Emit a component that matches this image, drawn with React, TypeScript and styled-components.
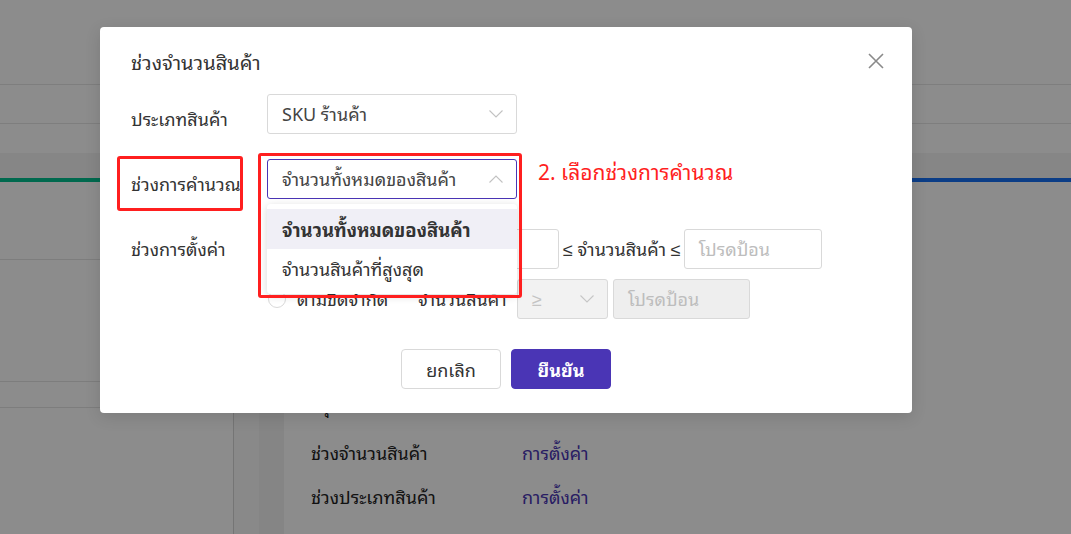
import React from "react";
import styled, { createGlobalStyle } from "styled-components";

const GlobalStyle = createGlobalStyle`
  html, body { margin: 0; padding: 0; }
  body {
    font-family: "Noto Sans Thai Looped", "Noto Sans Thai", "Noto Sans", "Liberation Sans", sans-serif;
    color: #333;
    line-height: 1.3;
  }
  * { box-sizing: border-box; }
`;

const Page = styled.div`
  position: relative;
  width: 1071px;
  height: 534px;
  overflow: hidden;
  background: #fff;
  display: flex;
  flex-direction: column;
`;

const TopArea = styled.div`
  height: 153px;
  display: flex;
  flex-direction: column;
`;

const TopLine = styled.div<{ $mt: number }>`
  margin-top: ${(p) => p.$mt}px;
  height: 1px;
  background: #e6e6e6;
`;

const TabBar = styled.div`
  height: 29px;
  background: #f4f4f4;
  display: flex;
  align-items: flex-end;
`;

const TabIndicator = styled.div<{ $color: string }>`
  flex: 1;
  height: 4px;
  background: ${(p) => p.$color};
`;

const Body = styled.div`
  flex: 1;
  display: flex;
`;

const Sidebar = styled.div`
  width: 234px;
  border-right: 1px solid #d6d6d6;
  display: flex;
  flex-direction: column;
`;

const SideLine = styled.div<{ $mt: number }>`
  margin-top: ${(p) => p.$mt}px;
  height: 1px;
  background: #e3e3e3;
`;

const Gutter = styled.div<{ $bg: string; $w: number }>`
  width: ${(p) => p.$w}px;
  background: ${(p) => p.$bg};
`;

const Content = styled.div`
  flex: 1;
  background: #fff;
  padding: 212px 0 0 27px;
  display: flex;
  flex-direction: column;
  gap: 22px;
`;

const ContentRow = styled.div<{ $mb?: number }>`
  display: flex;
  height: 22px;
  align-items: center;
  font-size: 18px;
  margin-bottom: ${(p) => p.$mb ?? 0}px;
`;

const RowName = styled.div`
  width: 211px;
  color: #222;
`;

const RowLink = styled.div`
  color: #4a35b5;
`;

const Overlay = styled.div`
  position: absolute;
  inset: 0;
  background: rgba(0, 0, 0, 0.45);
  padding: 27px 0 0 100px;
`;

const Modal = styled.div`
  position: relative;
  width: 812px;
  height: 386px;
  background: #fff;
  border-radius: 4px;
  box-shadow: 0 4px 16px rgba(0, 0, 0, 0.12);
  padding: 0 28px 0 30px;
  display: flex;
  flex-direction: column;
`;

const Header = styled.div`
  height: 67px;
  display: flex;
  align-items: center;
  justify-content: space-between;
`;

const Title = styled.div`
  font-size: 20px;
  color: #333;
  padding-left: 1px;
`;

const CloseButton = styled.button`
  width: 16px;
  height: 16px;
  padding: 0;
  border: none;
  background: none;
  display: flex;
  align-items: center;
  justify-content: center;
  cursor: pointer;
`;

const FormRow = styled.div<{ $mt: number }>`
  margin-top: ${(p) => p.$mt}px;
  height: 40px;
  display: flex;
  align-items: center;
`;

const Label = styled.div<{ $shift?: number }>`
  width: 137px;
  font-size: 18px;
  color: #333;
  padding-left: 1px;
  margin-top: ${(p) => p.$shift ?? 9}px;
`;

const LabelSpacer = styled.div`
  width: 137px;
`;

const SelectWrap = styled.div<{ $w: number }>`
  position: relative;
  width: ${(p) => p.$w}px;
  height: 40px;
`;

const SelectBox = styled.div<{ $active?: boolean; $disabled?: boolean }>`
  height: 40px;
  border: 1px solid ${(p) => (p.$active ? "#4a35b5" : "#d9d9d9")};
  border-radius: 3px;
  background: ${(p) => (p.$disabled ? "#f2f2f2" : "#fff")};
  display: flex;
  align-items: center;
  justify-content: space-between;
  padding: 0 13px 0 14px;
  font-size: 18px;
  color: ${(p) => (p.$disabled ? "#c4c4c4" : "#444")};
`;

const Menu = styled.div`
  position: absolute;
  top: 45px;
  left: 0;
  width: 100%;
  background: #fff;
  border-radius: 4px;
  box-shadow: 0 2px 8px rgba(0, 0, 0, 0.16);
  padding: 5px 0;
  z-index: 2;
`;

const Option = styled.div<{ $selected?: boolean }>`
  height: 40px;
  display: flex;
  align-items: center;
  padding: 0 15px;
  font-size: ${(p) => (p.$selected ? 18.5 : 18)}px;
  color: #333;
  font-weight: ${(p) => (p.$selected ? 700 : 400)};
  background: ${(p) => (p.$selected ? "#f0eff6" : "#fff")};
`;

const RangeGroup = styled.div`
  display: flex;
  align-items: center;
`;

const Radio = styled.span`
  width: 18px;
  height: 18px;
  border-radius: 50%;
  border: 1px solid #d9d9d9;
  background: #fff;
  margin: 0 11px 0 1px;
`;

const RadioText = styled.span<{ $w: number }>`
  width: ${(p) => p.$w}px;
  font-size: 18px;
  color: #333;
`;

const TextInput = styled.div<{ $w: number; $disabled?: boolean }>`
  width: ${(p) => p.$w}px;
  height: 40px;
  border: 1px solid #d9d9d9;
  border-radius: 3px;
  background: ${(p) => (p.$disabled ? "#eeeeee" : "#fff")};
  display: flex;
  align-items: center;
  padding: 0 14px;
  font-size: 18px;
  color: #bdbdbd;
`;

const Between = styled.span`
  font-size: 18px;
  color: #333;
  padding: 0 3px 0 4px;
  white-space: nowrap;
`;

const Spacer = styled.span<{ $w: number }>`
  width: ${(p) => p.$w}px;
`;

const Footer = styled.div`
  margin-top: 30px;
  display: flex;
  justify-content: center;
  gap: 10px;
  padding-right: 2px;
`;

const Button = styled.button<{ $primary?: boolean }>`
  width: 100px;
  height: 40px;
  border-radius: 4px;
  font-family: inherit;
  font-size: 18px;
  cursor: pointer;
  border: 1px solid ${(p) => (p.$primary ? "#4a35b5" : "#d9d9d9")};
  background: ${(p) => (p.$primary ? "#4a35b5" : "#fff")};
  color: ${(p) => (p.$primary ? "#fff" : "#333")};
  font-weight: ${(p) => (p.$primary ? 700 : 400)};
`;

const RedBox = styled.div<{ $l: number; $t: number; $w: number; $h: number }>`
  position: absolute;
  left: ${(p) => p.$l}px;
  top: ${(p) => p.$t}px;
  width: ${(p) => p.$w}px;
  height: ${(p) => p.$h}px;
  border: 3px solid #ff1f1f;
  border-radius: 3px;
  z-index: 3;
  pointer-events: none;
`;

const Note = styled.div`
  position: absolute;
  left: 438px;
  top: 130px;
  font-size: 21px;
  line-height: 28px;
  color: #ff1f1f;
  z-index: 3;
`;

const Chevron = ({ up, color = "#c2c2c2" }: { up?: boolean; color?: string }) => (
  <svg width="14" height="8" viewBox="0 0 14 8" fill="none">
    <path
      d={up ? "M0.5 7.5 L7 1 L13.5 7.5" : "M0.5 0.5 L7 7 L13.5 0.5"}
      stroke={color}
      strokeWidth="1.1"
    />
  </svg>
);

const CloseIcon = () => (
  <svg width="16" height="16" viewBox="0 0 16 16" fill="none">
    <path d="M1 1 L15 15 M15 1 L1 15" stroke="#8a8a8a" strokeWidth="1.6" />
  </svg>
);

export default function App() {
  return (
    <>
      <GlobalStyle />
      <Page>
        <TopArea>
          <TopLine $mt={84} />
          <TopLine $mt={38} />
        </TopArea>
        <TabBar>
          <TabIndicator $color="#00c08f" />
          <TabIndicator $color="#1470f5" />
        </TabBar>
        <Body>
          <Sidebar>
            <SideLine $mt={77} />
            <SideLine $mt={121} />
            <SideLine $mt={25} />
          </Sidebar>
          <Gutter $bg="#fafafa" $w={25} />
          <Gutter $bg="#f2f2f2" $w={25} />
          <Content>
            <ContentRow $mb={4}>
              <RowName>สรุปการตั้งค่า</RowName>
            </ContentRow>
            <ContentRow>
              <RowName>ช่วงจำนวนสินค้า</RowName>
              <RowLink>การตั้งค่า</RowLink>
            </ContentRow>
            <ContentRow>
              <RowName>ช่วงประเภทสินค้า</RowName>
              <RowLink>การตั้งค่า</RowLink>
            </ContentRow>
          </Content>
        </Body>
        <Overlay>
          <Modal>
            <Header>
              <Title>ช่วงจำนวนสินค้า</Title>
              <CloseButton aria-label="close">
                <CloseIcon />
              </CloseButton>
            </Header>
            <FormRow $mt={0}>
              <Label>ประเภทสินค้า</Label>
              <SelectWrap $w={250}>
                <SelectBox>
                  <span>SKU ร้านค้า</span>
                  <Chevron />
                </SelectBox>
              </SelectWrap>
            </FormRow>
            <FormRow $mt={25}>
              <Label>ช่วงการคำนวณ</Label>
              <SelectWrap $w={250}>
                <SelectBox $active>
                  <span>จำนวนทั้งหมดของสินค้า</span>
                  <Chevron up />
                </SelectBox>
                <Menu>
                  <Option $selected>จำนวนทั้งหมดของสินค้า</Option>
                  <Option>จำนวนสินค้าที่สูงสุด</Option>
                </Menu>
              </SelectWrap>
            </FormRow>
            <FormRow $mt={30}>
              <Label $shift={0}>ช่วงการตั้งค่า</Label>
              <RangeGroup>
                <Radio />
                <Spacer $w={125} />
                <TextInput $w={137} />
                <Between>≤ จำนวนสินค้า ≤</Between>
                <TextInput $w={138}>โปรดป้อน</TextInput>
              </RangeGroup>
            </FormRow>
            <FormRow $mt={10}>
              <LabelSpacer />
              <RangeGroup>
                <Radio />
                <RadioText $w={121}>ตามขีดจำกัด</RadioText>
                <RadioText $w={99}>จำนวนสินค้า</RadioText>
                <SelectWrap $w={91}>
                  <SelectBox $disabled>
                    <span>≥</span>
                    <Chevron color="#c6c6c6" />
                  </SelectBox>
                </SelectWrap>
                <Spacer $w={5} />
                <TextInput $w={137} $disabled>
                  โปรดป้อน
                </TextInput>
              </RangeGroup>
            </FormRow>
            <Footer>
              <Button>ยกเลิก</Button>
              <Button $primary>ยืนยัน</Button>
            </Footer>
            <RedBox $l={17} $t={129} $w={126} $h={55} />
            <RedBox $l={158} $t={126} $w={264} $h={145} />
            <Note>2. เลือกช่วงการคำนวณ</Note>
          </Modal>
        </Overlay>
      </Page>
    </>
  );
}
